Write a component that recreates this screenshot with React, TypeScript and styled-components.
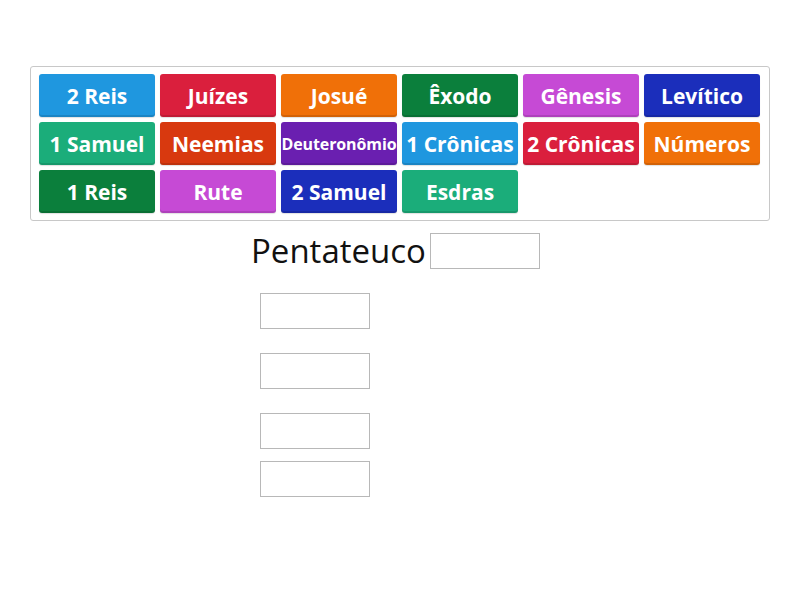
import React from "react";
import styled, { createGlobalStyle } from "styled-components";

const Global = createGlobalStyle`
  html, body { margin: 0; padding: 0; background: #fff; }
  body { font-family: "Open Sans", "Liberation Sans", sans-serif; }
`;

const Page = styled.div`
  width: 800px;
  height: 600px;
  box-sizing: border-box;
  padding: 66px 30px 0 30px;
`;

const Tray = styled.div`
  box-sizing: border-box;
  width: 740px;
  height: 155px;
  border: 1px solid #c8c8c8;
  border-radius: 3px;
  padding: 7px 8px 7px 8px;
  display: grid;
  grid-template-columns: repeat(6, 116px);
  grid-auto-rows: 43px;
  column-gap: 5px;
  row-gap: 5px;
`;

const Tile = styled.div<{ $bg: string; $small?: boolean }>`
  background: ${(p) => p.$bg};
  border-radius: 3px;
  box-shadow: inset 0 -2px 0 rgba(0, 0, 0, 0.12), 0 1px 1px rgba(0, 0, 0, 0.12);
  color: #fff;
  display: flex;
  align-items: center;
  justify-content: center;
  font-family: "Open Sans", sans-serif;
  font-weight: 700;
  font-size: ${(p) => (p.$small ? "16px" : "21px")};
  white-space: nowrap;
  letter-spacing: ${(p) => (p.$small ? "-0.1px" : "0")};
  overflow: hidden;
`;

const Groups = styled.div`
  margin-left: 221px;
  margin-top: 12px;
  display: flex;
  flex-direction: column;
`;

const HeadingRow = styled.div`
  display: flex;
  align-items: center;
  gap: 4px;
  height: 36px;
`;

const Title = styled.div`
  font-family: "Open Sans", sans-serif;
  font-size: 33px;
  color: #111;
  line-height: 36px;
`;

const Slot = styled.div<{ $top?: number }>`
  box-sizing: border-box;
  width: 110px;
  height: 36px;
  border: 1px solid #b8b8b8;
  background: #fff;
  margin-top: ${(p) => p.$top ?? 0}px;
`;

const Slots = styled.div`
  margin-left: 9px;
  display: flex;
  flex-direction: column;
`;

const C = {
  blue: "#1f97df",
  red: "#da1f3d",
  orange: "#f07008",
  green: "#0b7f3c",
  magenta: "#c64ad5",
  navy: "#1b2ebb",
  teal: "#1bad7a",
  redOrange: "#d8390f",
  purple: "#6a1fb0",
};

const tiles: { t: string; c: string; small?: boolean }[] = [
  { t: "2 Reis", c: C.blue },
  { t: "Juízes", c: C.red },
  { t: "Josué", c: C.orange },
  { t: "Êxodo", c: C.green },
  { t: "Gênesis", c: C.magenta },
  { t: "Levítico", c: C.navy },
  { t: "1 Samuel", c: C.teal },
  { t: "Neemias", c: C.redOrange },
  { t: "Deuteronômio", c: C.purple, small: true },
  { t: "1 Crônicas", c: C.blue },
  { t: "2 Crônicas", c: C.red },
  { t: "Números", c: C.orange },
  { t: "1 Reis", c: C.green },
  { t: "Rute", c: C.magenta },
  { t: "2 Samuel", c: C.navy },
  { t: "Esdras", c: C.teal },
];

export default function App() {
  return (
    <>
      <Global />
      <Page>
        <Tray>
          {tiles.map((x) => (
            <Tile key={x.t} $bg={x.c} $small={x.small}>
              {x.t}
            </Tile>
          ))}
        </Tray>
        <Groups>
          <HeadingRow>
            <Title>Pentateuco</Title>
            <Slot />
          </HeadingRow>
          <Slots>
            <Slot $top={24} />
            <Slot $top={24} />
            <Slot $top={24} />
            <Slot $top={12} />
          </Slots>
        </Groups>
      </Page>
    </>
  );
}
